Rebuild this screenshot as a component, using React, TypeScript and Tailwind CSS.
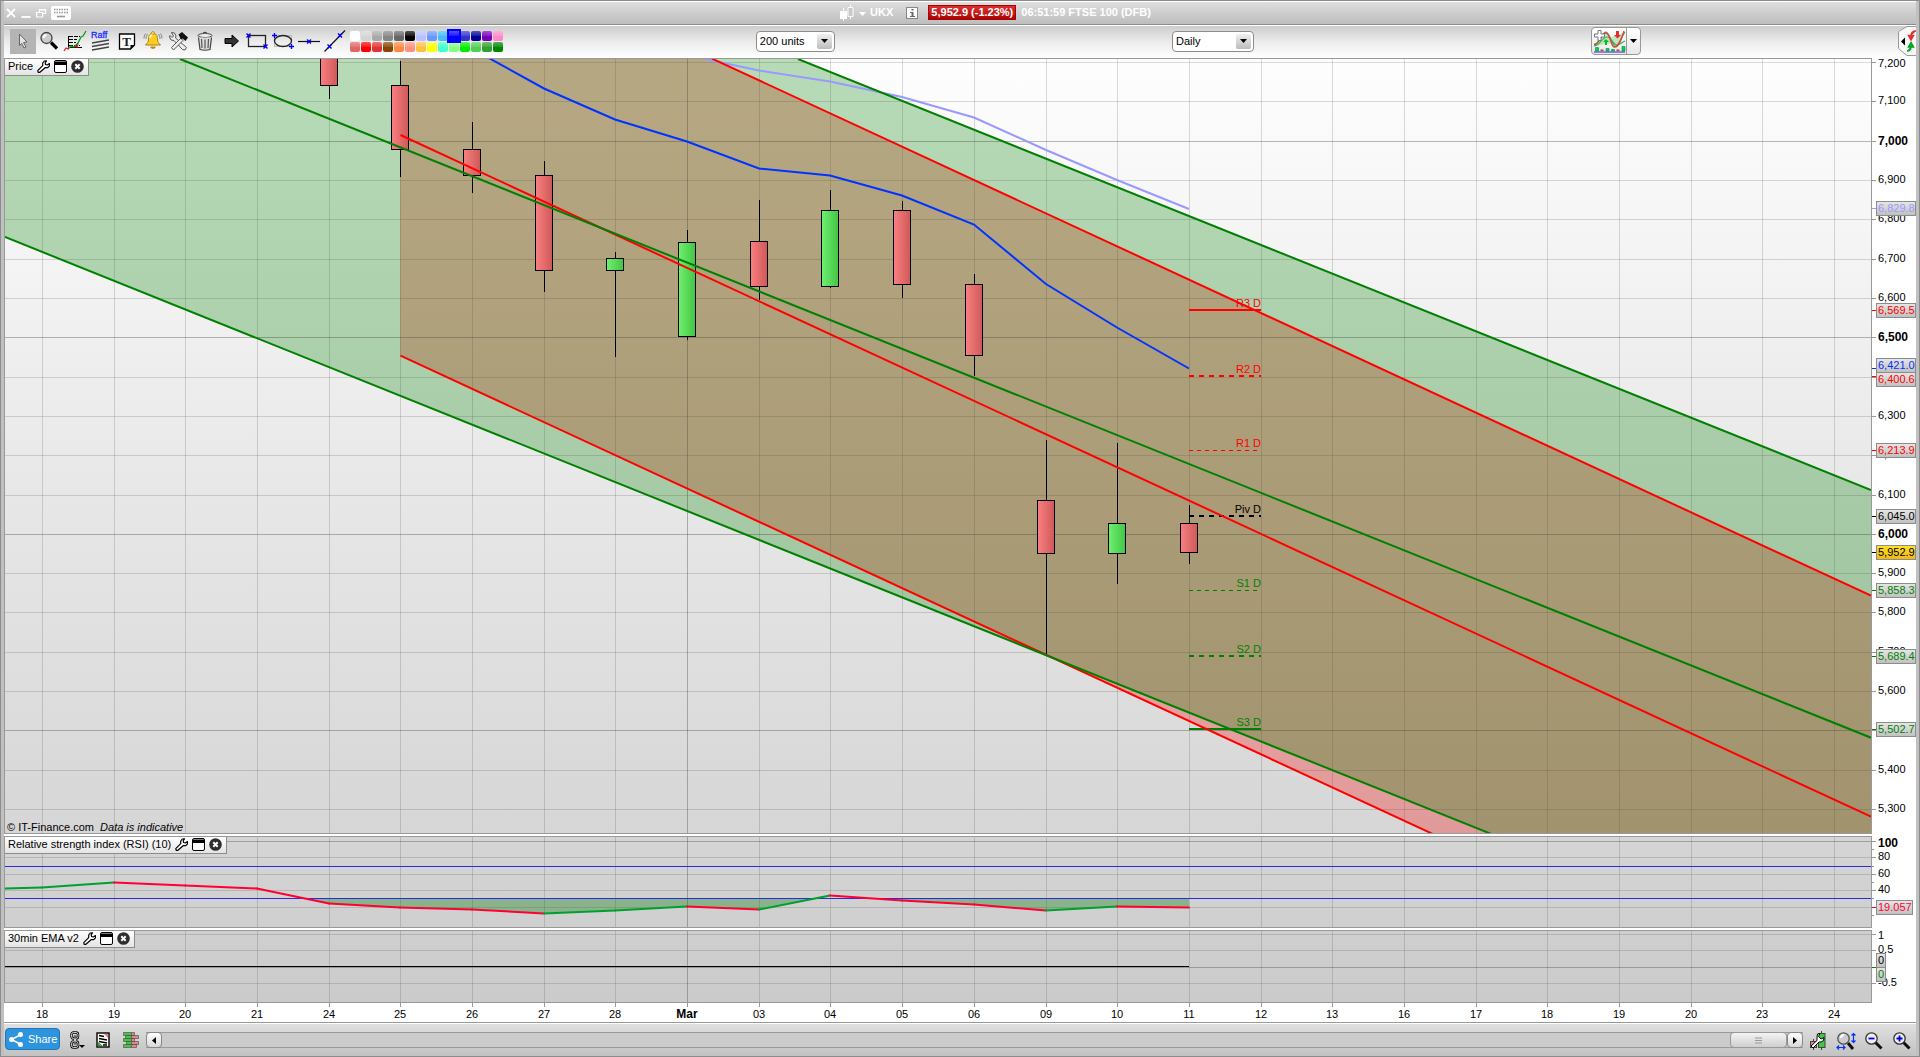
import type { ReactNode } from "react";

const DAYS: [string, number][] = [
  ["18", 42], ["19", 114], ["20", 185], ["21", 257], ["24", 329], ["25", 400], ["26", 472],
  ["27", 544], ["28", 615], ["Mar", 687], ["03", 759], ["04", 830], ["05", 902], ["06", 974],
  ["09", 1046], ["10", 1117], ["11", 1189], ["12", 1261], ["13", 1332], ["16", 1404],
  ["17", 1476], ["18", 1547], ["19", 1619], ["20", 1691], ["23", 1762], ["24", 1834],
];

const LEVELS: [number, number][] = [
  [7200, 62], [7100, 101], [7000, 141], [6900, 180], [6800, 219], [6700, 259], [6600, 298],
  [6500, 337], [6400, 377], [6300, 416], [6200, 455], [6100, 495], [6000, 534], [5900, 573],
  [5800, 612], [5700, 652], [5600, 691], [5500, 730], [5400, 770], [5300, 809],
];
const percentX = (x: number) => `${((x - 5) / 1866) * 100}%`;

// center, high, open/close top, open/close bottom, low, rising
const CANDLES: [number, number, number, number, number, boolean][] = [
  [329, 40, 40, 85, 99, false],
  [400, 61, 85, 149, 177, false],
  [472, 122, 149, 175, 193, false],
  [544, 161, 175, 270, 292, false],
  [615, 252, 258, 270, 357, true],
  [687, 230, 242, 336, 340, true],
  [759, 200, 241, 286, 300, false],
  [830, 190, 210, 286, 288, true],
  [902, 201, 210, 284, 298, false],
  [974, 274, 284, 355, 376, false],
  [1046, 440, 500, 553, 655, false],
  [1117, 443, 523, 553, 584, true],
  [1189, 505, 523, 552, 564, false],
];

const PIVOTS = [
  { name: "R3 D", y: 310, text: 307, color: "#ff0000", width: 2, dash: undefined },
  { name: "R2 D", y: 376, text: 373, color: "#ff0000", width: 2, dash: "5 5" },
  { name: "R1 D", y: 450.5, text: 447, color: "#ff0000", width: 1, dash: "4 4" },
  { name: "Piv D", y: 516, text: 513, color: "#000000", width: 2, dash: "5 5" },
  { name: "S1 D", y: 590.5, text: 587, color: "#008000", width: 1, dash: "4 4" },
  { name: "S2 D", y: 656, text: 653, color: "#008000", width: 2, dash: "5 5" },
  { name: "S3 D", y: 729, text: 726, color: "#008000", width: 2, dash: undefined },
];

const TAGS: { text: string; top: number; tick: number; color: string; gold?: boolean }[] = [
  { text: "6,829.8", top: 201, tick: 208, color: "#9999ff" },
  { text: "6,569.5", top: 303, tick: 310, color: "#ff0000" },
  { text: "6,400.6", top: 372, tick: 376, color: "#ff0000" },
  { text: "6,421.0", top: 358, tick: 368, color: "#0033ff" },
  { text: "6,213.9", top: 443, tick: 450, color: "#ff0000" },
  { text: "6,045.0", top: 509, tick: 516, color: "#000000" },
  { text: "5,952.9", top: 545, tick: 552, color: "#000000", gold: true },
  { text: "5,858.3", top: 583, tick: 590, color: "#008000" },
  { text: "5,689.4", top: 649, tick: 656, color: "#008000" },
  { text: "5,502.7", top: 722, tick: 729, color: "#008000" },
];

const RSI: [number, number][] = [
  [5, 888], [42, 887], [114, 882], [185, 885], [257, 888], [329, 903], [400, 907], [472, 909],
  [544, 913], [615, 910], [687, 906], [759, 909], [830, 895], [902, 900], [974, 904],
  [1046, 910], [1117, 906], [1189, 907],
];

const PALETTE = [
  ["#ffffff", "#d4d4d4", "#a8a8a8", "#858585", "#666666", "#000000", "#b8c0ff", "#6699ff", "#44bbff", "#0000ff", "#3333cc", "#000099", "#7700bb", "#ff88cc"],
  ["#dd6666", "#ff0000", "#e03333", "#884400", "#ff8844", "#ff9080", "#ffc040", "#ffff00", "#44ffcc", "#80ff80", "#00ee00", "#50d050", "#30a030", "#008800"],
];

const gridStroke = (major: boolean) => (major ? "rgba(70,70,60,0.38)" : "rgba(70,70,60,0.2)");

function DayGrid({ top, bottom }: { top: number; bottom: number }) {
  return (
    <g shapeRendering="crispEdges">
      {DAYS.map(([day, x]) => (
        <line key={x} x1={x + 0.5} x2={x + 0.5} y1={top} y2={bottom} stroke={gridStroke(day === "Mar")} />
      ))}
    </g>
  );
}

function RowGrid({ rows, major = [] }: { rows: number[]; major?: number[] }) {
  return (
    <g shapeRendering="crispEdges">
      {rows.map((y) => (
        <line key={y} x1="5" x2="1871" y1={y + 0.5} y2={y + 0.5} stroke={gridStroke(major.includes(y))} />
      ))}
    </g>
  );
}

function Wrench() {
  return (
    <svg className="h-[13px] w-[13px]" viewBox="0 0 13 13" fill="#fff" stroke="#000" strokeWidth="1.2" strokeLinejoin="round">
      <path d="M9.5.8 8.2 2.6l.3 1.9 1.8.4L12.4 3.600l.1 2.300-1.700 1.700-2.700.1-5.200 4.600H1.200L.8 10.600l4.900-5V3L7.300 1z" />
    </svg>
  );
}

function PanelTag({ title }: { title: string }) {
  return (
    <div className="absolute top-0 left-0 flex h-[17px] items-center gap-1 border-r border-b border-[#8c8c8c] bg-linear-to-b from-white to-[#e4e4e4] pr-1 pb-0.5 pl-[3px] text-[11px] leading-[14px] whitespace-nowrap">
      <span>{title}</span>
      <button type="button" aria-label={`${title} settings`}><Wrench /></button>
      <button type="button" aria-label={`Maximize ${title}`}>
        <svg className="h-[13px] w-[13px]" viewBox="0 0 13 13">
          <rect x=".5" y=".5" width="12" height="12" rx="1.500" fill="#fff" stroke="#000" />
          <path d="M1 1.500h11V5H1z" />
        </svg>
      </button>
      <button type="button" aria-label={`Close ${title}`}>
        <svg className="h-[13px] w-[13px]" viewBox="0 0 13 13">
          <circle cx="6.500" cy="6.500" r="6.300" fill="#2e2e2e" />
          <path d="m4.300 4.300 4.400 4.400m0-4.400L4.300 8.700" stroke="#fff" strokeWidth="2" />
        </svg>
      </button>
    </div>
  );
}

function PriceChart() {
  return (
    <>
      <svg className="block h-full w-full" role="img" aria-label="FTSE 100 daily price chart">
        <svg width="100%" height="100%" viewBox="5 59 1866 774" preserveAspectRatio="none">
          <defs>
            <linearGradient id="falling"><stop offset="0" stopColor="#f88080" /><stop offset="1" stopColor="#cf5858" /></linearGradient>
            <linearGradient id="rising"><stop offset="0" stopColor="#70f070" /><stop offset="1" stopColor="#44c444" /></linearGradient>
          </defs>
          <path d="M400-86 1871 595.700V1038L400 355.700z" fill="#ff0000" fillOpacity=".28" />
          <path d="M5-260 1871 490V987L5 237z" fill="#008000" fillOpacity=".28" />
          <DayGrid top={59} bottom={833} />
          <RowGrid rows={LEVELS.map(([, y]) => y)} major={[141, 337, 534, 730]} />
          {CANDLES.map(([x, high, top, bottom, low, up]) => (
            <g key={x} stroke="#000">
              <path d={`M${x + 0.5} ${high}V${low}`} />
              <rect x={x - 8.5} y={top + 0.5} width="17" height={bottom - top} fill={up ? "url(#rising)" : "url(#falling)"} />
            </g>
          ))}
          <path d="M705 59 759 70.500 830 81.500 902 97 974 117.500 1046 150 1117 180 1189 209" fill="none" stroke="#9999ff" strokeWidth="2" />
          <path d="M487 57 544 88.500 615 119.500 687 141.500 759 168.500 830 175.500 902 195.500 974 224.500 1046 284 1117 327.500 1189 368.500" fill="none" stroke="#0033ff" strokeWidth="2" />
          {PIVOTS.map((p) => (
            <line key={p.name} x1="1189" x2="1261" y1={p.y} y2={p.y} stroke={p.color} strokeWidth={p.width} strokeDasharray={p.dash} />
          ))}
          <g fill="none" stroke="#ff0000" strokeWidth="2">
            <path d="M712 58.600 1871 595.700" />
            <path d="M400.500 135 1871 816.700" />
            <path d="M400.500 355.700 1871 1037" />
          </g>
          <g fill="none" stroke="#008000" strokeWidth="2">
            <path d="M798 59 1871 490" />
            <path d="M180 59 1871 737.700" />
            <path d="M5 237 1871 986.500" />
          </g>
        </svg>
        {PIVOTS.map((p) => (
          <text key={p.name} x={percentX(1261)} y={p.text - 59} textAnchor="end" fontSize="11" fill={p.color}>{p.name}</text>
        ))}
      </svg>
      <PanelTag title="Price" />
      <p className="absolute bottom-0 left-0.5 text-[11px] leading-[11px]">
        © IT-Finance.com&nbsp; <i>Data is indicative</i>
      </p>
    </>
  );
}

function Tag({ x = 1876, width = 39, top, tick, text, color, gold }: { x?: number; width?: number; top: number; tick: number; text: string; color: string; gold?: boolean }) {
  return (
    <g>
      <path d={`M1872 ${tick + 0.5}h4`} stroke={color} />
      <rect x={x + 0.5} y={top + 0.5} width={width} height="14" fill={gold ? "url(#gold)" : "url(#silver)"} stroke="#8c8c8c" />
      <text x={x + 2} y={top + 11} fill={color}>{text}</text>
    </g>
  );
}

function PriceAxis() {
  return (
    <svg className="block h-[776px] w-11" viewBox="1872 58 44 776" fontSize="11">
      <defs>
        <linearGradient id="silver" x2="0" y2="1"><stop offset="0" stopColor="#e6e6e6" /><stop offset="1" stopColor="#c0c0c0" /></linearGradient>
        <linearGradient id="gold" x2="0" y2="1"><stop offset="0" stopColor="#ffe428" /><stop offset="1" stopColor="#f0b414" /></linearGradient>
      </defs>
      {LEVELS.map(([p, y]) => {
        const bold = p % 500 === 0;
        return (
          <g key={p}>
            <path d={`M1872 ${y + 0.5}h4`} stroke="#999" />
            <text x="1878" y={p === 7200 ? y + 5 : bold ? y + 4 : y + 3} fontSize={bold ? 12 : 11} fontWeight={bold ? 700 : 400}>
              {p.toLocaleString("en-US")}
            </text>
          </g>
        );
      })}
      {TAGS.map((t) => <Tag key={t.text} {...t} />)}
    </svg>
  );
}

function RsiChart() {
  return (
    <>
      <svg className="block h-full w-full" viewBox="5 837 1866 90" preserveAspectRatio="none" role="img" aria-label="Relative strength index">
        <DayGrid top={837} bottom={927} />
        <RowGrid rows={[841, 857, 874, 890, 907]} major={[841]} />
        <path d="M305 898.500 329 903.500 400 907.500 472 909.500 544 913.500 615 910.500 687 906.500 759 909.500 815 898.500z M878 898.500 902 900.500 974 904.500 1046 910.500 1117 906.500 1189 907.500V898.500z" fill="#108010" fillOpacity=".36" />
        <path d="M5 866.500H1871M5 898.500H1871" stroke="#2a2ae0" shapeRendering="crispEdges" />
        {RSI.slice(1).map(([x, y], i) => (
          <path key={x} d={`M${RSI[i][0]} ${RSI[i][1] + 0.5}L${x} ${y + 0.5}`} stroke={y > RSI[i][1] ? "#ff0033" : "#00a030"} strokeWidth="2" strokeLinecap="round" />
        ))}
      </svg>
      <PanelTag title="Relative strength index (RSI) (10)" />
    </>
  );
}

function RsiAxis() {
  return (
    <svg className="block h-[92px] w-11" viewBox="1872 836 44 92" fontSize="11">
      <path d="M1872 841.500h4m-4 16h4m-4 17h4m-4 16h4m-4-41h2m-2 17h2m-2 16h2m-2 16h2m-2 17h2" stroke="#999" />
      <text x="1878" y="847" fontSize="12" fontWeight="700">100</text>
      <text x="1878" y="860">80</text>
      <text x="1878" y="877">60</text>
      <text x="1878" y="893">40</text>
      <Tag top={900} tick={907} width={36} text="19.057" color="#ff0033" />
    </svg>
  );
}

function EmaChart() {
  return (
    <>
      <svg className="block h-full w-full" viewBox="5 931 1866 71" preserveAspectRatio="none" role="img" aria-label="30min EMA v2">
        <DayGrid top={931} bottom={1002} />
        <RowGrid rows={[934, 950, 967, 983]} major={[967]} />
        <path d="M5 966.500H1189" stroke="#000" shapeRendering="crispEdges" />
      </svg>
      <PanelTag title="30min EMA v2" />
    </>
  );
}

function EmaAxis() {
  return (
    <svg className="block h-[73px] w-11" viewBox="1872 930 44 73" fontSize="11">
      <path d="M1872 934.500h4m-4 16h4m-4 33h4" stroke="#999" />
      <text x="1878" y="939">1</text>
      <text x="1878" y="953">0.5</text>
      <text x="1878" y="986">-0.5</text>
      <Tag top={967} tick={967} width={9} text="0" color="#008000" />
      <Tag top={953} tick={967} width={9} text="0" color="#000000" />
      <path d="M1872 967.500h4" stroke="#008000" />
    </svg>
  );
}

function Tool({ label, children, active }: { label: string; children: ReactNode; active?: boolean }) {
  return (
    <button type="button" aria-label={label} className={active ? "flex h-[25px] w-[26px] items-center justify-center bg-[#b4b4b4]" : "flex h-[25px] w-[26px] items-center justify-center"}>
      <svg className="h-6 w-6" viewBox="0 0 24 24" fill="none">{children}</svg>
    </button>
  );
}

const Cross = ({ x, y }: { x: number; y: number }) => (
  <path d={`M${x - 2} ${y - 2}l4 4m0-4l-4 4`} stroke="#0000ff" strokeWidth="1.4" />
);

function Tools() {
  return (
    <div className="flex">
      <Tool label="Select" active>
        <path d="m8.500 5 7.500 8-3.500.5 2.500 4.500-2 1-2.300-4.600-2.200 2.100z" fill="#e4e4e4" stroke="#666" />
      </Tool>
      <Tool label="Zoom">
        <circle cx="9.500" cy="9" r="5.500" fill="#ccc" stroke="#444" strokeWidth="1.300" />
        <path d="M6.500 9a3 3 0 0 1 3-3" stroke="#fff" strokeWidth="2" />
        <path d="m14 13.500 6 6" stroke="#000" strokeWidth="3.200" />
      </Tool>
      <Tool label="Indicator list">
        <path d="M6 7.500h11M6 10.500h8M6 13.500h7M6 16.500h11" stroke="#000" strokeWidth="1.200" strokeDasharray="4 1" />
        <path d="M5.500 7v11.500H19" stroke="#000" />
        <path d="m5 20 3-3 3 1 4-4 3-6 2-1 3-5" stroke="#00a020" strokeWidth="1.300" />
        <path d="m1 22 2-3 2 1 1-2m6-1 2 1 1-3" stroke="#e02020" strokeWidth="1.300" />
      </Tool>
      <Tool label="Raff channel">
        <text x="2" y="9" fontSize="9" fill="#1830ff" stroke="#1830ff" strokeWidth=".3">Raff</text>
        <path d="m3 14 17-3M3 17.500l17-3M3 21l17-3" stroke="#444" strokeWidth="1.400" />
      </Tool>
      <Tool label="Text">
        <path d="M4.500 5h15v11l-4 4h-11z" fill="#fff" stroke="#000" strokeWidth="1.300" />
        <path d="M15.500 20v-4h4z" fill="#000" />
        <text x="11.500" y="16.500" fontSize="13" fontWeight="700" textAnchor="middle" fill="#222" fontFamily="Liberation Serif, serif">T</text>
      </Tool>
      <Tool label="Alert">
        <path d="M12 4.500c4 0 4.500 3 4.500 6.500 0 2 1.500 3 3 5h-15c1.500-2 3-3 3-5 0-3.500.5-6.500 4.500-6.500z" fill="#ffcc20" stroke="#a88010" />
        <circle cx="12" cy="4" r="1.500" fill="#ffe060" stroke="#a88010" strokeWidth=".7" />
        <path d="M9 9c0-2 1-3 2.500-3" stroke="#fff6b0" strokeWidth="1.600" />
        <path d="M9.500 17.500h5v1.500l-2.500 1-2.500-1z" fill="#c08a10" />
        <path d="M5 10c0-2 .5-3.500 1.500-5M3 9.500C3 7.500 3.500 6 4.500 4.500M19 10c0-2-.5-3.500-1.500-5m3.500 4.500c0-2-.5-3.500-1.500-5" stroke="#777" strokeWidth=".9" />
      </Tool>
      <Tool label="Tools">
        <path d="M4.500 3.500 7.500 4l1.500 3-.5 2L19.500 18.500l-1.500 2.500-2.500-.5L7 11.500l-3-.5-1.500-3 .5-1.500L5 8.500 6.500 7z" fill="#eee" stroke="#555" />
        <path d="m14 9-9.500 9.500 2 2.500 9.500-9.500z" fill="#eee" stroke="#555" />
        <path d="m11.500 5.500 3.500-2.500 6 5.500-2.500 3.500-3-2.500-1.500 1z" fill="#111" />
      </Tool>
      <Tool label="Delete">
        <ellipse cx="12" cy="6.500" rx="7" ry="2" fill="#eee" stroke="#444" />
        <path d="M10 4.500q2-2 4 0M5.500 8.500 7 20.500q5 1.500 10 0l1.500-12" fill="#ddd" stroke="#444" strokeWidth="1.200" />
        <path d="m8.500 10 .5 9m3-8.500v9m3.500-9.500-.5 9" stroke="#555" strokeWidth="1.200" />
      </Tool>
      <Tool label="Arrow"><path d="M6 9.500h7V6l6.500 6-6.500 6v-3.500H6z" fill="#333" stroke="#000" /></Tool>
      <Tool label="Rectangle">
        <rect x="3.500" y="6.500" width="17" height="11" stroke="#222" strokeWidth="1.300" />
        <Cross x={3.500} y={6.500} /><Cross x={20.500} y={17.500} />
      </Tool>
      <Tool label="Ellipse">
        <rect x="3.500" y="6.500" width="17" height="11" stroke="#bbb" />
        <ellipse cx="12" cy="12" rx="8.500" ry="5.500" stroke="#222" strokeWidth="1.300" />
        <path d="M3.500 4v5M1 6.500h5m14.500 8.500v5M18 17.500h5" stroke="#0000ff" strokeWidth="1.300" />
      </Tool>
      <Tool label="Horizontal line"><path d="M1 12.500h22" stroke="#111" strokeWidth="1.200" /><Cross x={12} y={12.500} /></Tool>
      <Tool label="Line"><path d="M1.500 22.500 22 1.500" stroke="#111" strokeWidth="1.200" /><Cross x={6.500} y={17.500} /><Cross x={17} y={6.500} /></Tool>
    </div>
  );
}

function Palette() {
  return (
    <div className="ml-0.5 flex flex-col gap-px">
      {PALETTE.map((row, r) => (
        <div key={r} className="flex gap-px">
          {row.map((color) => (
            <button
              type="button"
              key={color}
              aria-label={`Colour ${color}`}
              className={color === "#0000ff" ? "relative h-2.5 w-2.5 rounded-none ring-2 ring-[#0000ff]" : "h-2.5 w-2.5 rounded-xs"}
              style={{ backgroundImage: "linear-gradient(rgba(255,255,255,.32), rgba(255,255,255,.12) 45%, transparent 50%)", backgroundColor: color }}
            />
          ))}
        </div>
      ))}
    </div>
  );
}

function Dropdown({ label, value, options, className }: { label: string; value: string; options: string[]; className: string }) {
  return (
    <div className={`relative ${className}`}>
      <select aria-label={label} defaultValue={value} className="block h-[21px] w-full appearance-none rounded-sm border border-[#8c8c8c] bg-white pl-[3px] text-[11px] leading-4">
        {options.map((o) => <option key={o}>{o}</option>)}
      </select>
      <span className="pointer-events-none absolute top-[3px] right-[3px] flex h-[15px] w-[15px] items-center justify-center rounded-xs bg-linear-to-b from-[#f0f0f0] to-[#bdbdbd]">
        <svg className="h-1 w-[7px]" viewBox="0 0 7 4"><path d="M0 0h7L3.500 4z" /></svg>
      </span>
    </div>
  );
}

function TitleBar() {
  return (
    <header className="flex h-6 items-center border-t border-b border-t-white border-b-[#8c8c8c] bg-linear-to-b from-[#dedede] to-[#bdbdbd] pb-px pl-0.5 text-[11px] font-bold text-white">
      <div className="flex w-[68px] items-center gap-1">
        <button type="button" aria-label="Close window"><svg className="h-2.5 w-2.5" viewBox="0 0 10 10"><path d="m1 1 8 8m0-8L1 9" stroke="#fff" strokeWidth="1.800" /></svg></button>
        <button type="button" aria-label="Minimize window" className="ml-px"><svg className="h-2.5 w-2.5" viewBox="0 0 10 10"><path d="M.5 9h9" stroke="#fff" strokeWidth="1.800" /></svg></button>
        <button type="button" aria-label="Restore window" className="ml-px"><svg className="h-2.5 w-2.5" viewBox="0 0 10 10" fill="none" stroke="#fff" strokeWidth="1.200"><path d="M3.500 4V1.500h6v4H7M.6 4.500h6v4.500h-6zM3.500 2h6" /></svg></button>
        <button type="button" aria-label="Keyboard" className="ml-px shrink-0">
          <svg className="h-3.5 w-5" viewBox="0 0 20 14"><rect width="20" height="14" rx="2" fill="#fff" /><path d="M3 3.500h14M3 6.500h14" stroke="#999" strokeWidth="1.600" strokeDasharray="1.500 1" /><path d="M6 10.500h8" stroke="#999" strokeWidth="1.600" /></svg>
        </button>
      </div>
      <div className="flex flex-1 items-center justify-center whitespace-nowrap">
        <svg className="h-4 w-[15px]" viewBox="0 0 15 16"><path d="M4.500 3v13M11.500 0v14" stroke="#fff" /><path d="M1 6h7v8H1z" fill="#fff" /><path d="M9 2.500h5v9H9z" fill="#c8c8c8" stroke="#fff" /></svg>
        <svg className="mt-0.5 ml-[5px] h-1 w-[7px]" viewBox="0 0 7 4"><path d="M0 0h7L3.500 4z" fill="#fff" /></svg>
        <span className="ml-1">UKX</span>
        <button type="button" aria-label="Instrument information" className="ml-[13px] flex h-3 w-3 items-center justify-center border border-[#888] bg-white">
          <svg className="h-2 w-[5px]" viewBox="0 0 5 8"><path d="M1.500 0h2v1.500h-2zM0 3h3.500v4H5v1H0V7h1.500V4H0z" fill="#667" /></svg>
        </button>
        <span className="ml-2.5 border border-[#a00] bg-linear-to-b from-[#dd3030] to-[#aa0000] px-0.5 leading-[13px]">5,952.9 (-1.23%)</span>
        <span className="ml-[5px]">06:51:59 FTSE 100 (DFB)</span>
      </div>
    </header>
  );
}

function Toolbar() {
  return (
    <div className="flex h-[33px] items-center border-t border-white bg-linear-to-b from-[#cdcdcd] via-[#ececec] to-white pb-0.5 pl-1.5">
      <Tools />
      <Palette />
      <div className="grow-[3]" />
      <Dropdown label="Units shown" value="200 units" options={["100 units", "200 units", "500 units"]} className="w-[79px]" />
      <div className="grow-[4]" />
      <Dropdown label="Timeframe" value="Daily" options={["Hourly", "Daily", "Weekly"]} className="w-[82px]" />
      <div className="grow-[4]" />
      <div className="mr-1 flex h-7 rounded-sm border border-[#999] bg-linear-to-b from-white to-[#e8e8e8]">
        <button type="button" aria-label="Add indicator" className="w-[35px] border-r border-[#999] pl-0.5">
          <svg className="h-6 w-8" viewBox="0 0 32 24" fill="none">
            <path d="M0 15c6 1 6-11 12-12 4 0 6 15 10 15 3 0 6-12 9-15M0 17C6 17 8 8 13 8c5 0 6 8 10 8 3 0 5-3 8-4" stroke="#40b050" strokeWidth="1.200" fill="#70d07066" />
            <path d="M0 16C6 15 7 4 12 4c4 0 5 14 8 14 4 0 8-9 10-16" stroke="#e04040" strokeWidth="1.300" />
            <path d="M4 1.500h3V5h3.500v3H7v3.500H4V8H.5V5H4z" fill="#fff" stroke="#778" />
            <path d="m12 10 3 3h-2v3h-2v-3H9z" fill="#00c020" />
            <path d="M22 2h3v4h2l-3.500 3.500L20 6h2z" fill="#e03030" />
            <path d="M1.500 18.500h3V22h-3zM12 19.500h3V22h-3zM17.500 20.500h3V22h-3zM28 17.500h3V22h-3z" fill="#00dd20" stroke="#086" strokeWidth=".6" />
            <path d="M6.500 20.500h3V22h-3zM22.500 20.500h3V22h-3z" fill="#e03030" />
            <path d="M0 23h31" stroke="#2020cc" />
          </svg>
        </button>
        <button type="button" aria-label="Indicator menu" className="flex w-[13px] items-center justify-center">
          <svg className="h-1 w-[7px]" viewBox="0 0 7 4"><path d="M0 0h7L3.500 4z" /></svg>
        </button>
      </div>
      <div className="grow-[3]" />
      <button type="button" aria-label="Open trading panel" className="h-[30px] w-[18px]">
        <svg className="h-[30px] w-[18px]" viewBox="0 0 18 30" fill="none">
          <path d="M18 .5H9L1.500 5Q.5 5.500.5 7v14q0 1.500 1 2.500L9 29.500h9" fill="#f8f8f8" stroke="#999" />
          <path d="M7 11.500v8L3 15.500z" fill="#000" />
          <path d="M18 5q-5 0-5 5M10.500 9.500h5L13 14z" stroke="#e03030" strokeWidth="1.500" fill="#e03030" />
          <path d="M9 25q4 0 4-5M10.500 21h5L13 16.500z" stroke="#00a020" strokeWidth="1.500" fill="#00c030" />
        </svg>
      </button>
    </div>
  );
}

function Magnifier({ children }: { children?: ReactNode }) {
  return (
    <svg className="h-[18px] w-[18px]" viewBox="0 0 18 18" fill="none">
      <path d="m10.500 10.500 6 6" stroke="#111" strokeWidth="3" />
      <circle cx="6.500" cy="6.500" r="5.700" fill="#eee" stroke="#333" strokeWidth="1.300" />
      {children}
    </svg>
  );
}

const LINKS = "M4 7.500H3.500a2 2 0 0 1-2-2v-2a2 2 0 0 1 2-2H6a2 2 0 0 1 2 2v2a2 2 0 0 1-2 2M4 10.500H3.500a2 2 0 0 0-2 2v2a2 2 0 0 0 2 2H6a2 2 0 0 0 2-2v-2a2 2 0 0 0-2-2M5 4.500v3M5 10.500v3";

function BottomBar() {
  return (
    <footer className="flex h-8 items-start bg-linear-to-b from-[#e0e0e0] to-[#c2c2c2] pt-1 pl-px">
      <button type="button" className="flex h-[22px] w-[55px] items-center gap-[5px] rounded-sm border border-[#1c78b8] bg-[#2d94dd] pl-[3px] text-[11px] text-white">
        <svg className="h-[15px] w-3.5" viewBox="0 0 14 15"><path d="M12 2.500 2.500 7.500 12 12.500" fill="none" stroke="#fff" strokeWidth="1.500" /><g fill="#fff"><circle cx="11.500" cy="2.500" r="2.500" /><circle cx="2.500" cy="7.500" r="2.500" /><circle cx="11.500" cy="12.500" r="2.500" /></g></svg>
        Share
      </button>
      <div className="mt-[3px] ml-2.5 flex items-center">
        <button type="button" aria-label="Link charts">
          <svg className="h-[18px] w-4" viewBox="0 0 16 18" fill="none">
            <path d={LINKS} stroke="#000" strokeWidth="2.400" />
            <path d={LINKS} stroke="#fff" strokeWidth=".8" />
            <path d="M9 14h6l-3 3z" fill="#000" />
          </svg>
        </button>
        <button type="button" aria-label="News" className="ml-2.5">
          <svg className="h-4 w-[14px]" viewBox="0 0 14 16"><rect x="1" y="1" width="12" height="14" fill="#fff" stroke="#000" strokeWidth="1.400" /><path d="M8 2h4v4z" fill="#f08080" /><path d="M2 10v4h5z" fill="#30a830" /><path d="m3 3.500 5 1m-5 2 8 1.500M3 9.500l8 1.500M7 13h4" stroke="#000" strokeWidth="1.300" /></svg>
        </button>
        <button type="button" aria-label="Order book" className="ml-[13px]">
          <svg className="h-4 w-[17px]" viewBox="0 0 17 16" stroke="#555" strokeWidth=".7"><g fill="#40c840"><path d="M.5.5h8v3h-8zM2.500 3.500h6v3h-6zM.5 6.500h8v3h-8zM3.500 9.500h5v3h-5zM.5 12.500h8v3h-8z" /></g><g fill="#e08888"><path d="M8.500.5h3v3h-3zM8.500 3.500h7v3h-7zM8.500 6.500h3v3h-3zM8.500 9.500h7v3h-7zM8.500 12.500h5v3h-5z" /></g></svg>
        </button>
      </div>
      <div className="mt-1 ml-[6px] flex h-4 flex-1 items-center border-y border-[#999] bg-[#cbcbcb]">
        <button type="button" aria-label="Scroll left" className="flex h-4 w-4 items-center justify-center rounded-sm border border-[#888] bg-linear-to-b from-white to-[#d8d8d8]">
          <svg className="h-[7px] w-1" viewBox="0 0 4 7"><path d="M4 0v7L0 3.500z" /></svg>
        </button>
        <div className="flex-1" />
        <button type="button" aria-label="Scroll position" className="flex h-4 w-[57px] items-center justify-center rounded-sm border border-[#999] bg-linear-to-b from-[#f4f4f4] to-[#cfcfcf]">
          <svg className="h-[7px] w-[7px]" viewBox="0 0 7 7"><path d="M0 1h7M0 3.500h7M0 6h7" stroke="#999" /></svg>
        </button>
        <button type="button" aria-label="Scroll right" className="flex h-4 w-4 items-center justify-center rounded-sm border border-[#888] bg-linear-to-b from-white to-[#d8d8d8]">
          <svg className="h-[7px] w-1" viewBox="0 0 4 7"><path d="M0 0v7l4-3.500z" /></svg>
        </button>
      </div>
      <div className="mt-[3px] flex items-center pr-[5px] pl-[7px]">
        <button type="button" aria-label="Chart settings">
          <svg className="h-[19px] w-4" viewBox="0 0 16 19"><path d="M11.500 0v19M3.500 8v11" stroke="#444" /><rect x="8.500" y="2.500" width="6.500" height="14" fill="#40c840" stroke="#444" /><rect x=".5" y="10.500" width="6" height="6" fill="#e08080" stroke="#444" /><path d="m7.500 3 2.500-.5-1.500 3L11 8l3-1.500-.5 3-2.500 1.500H9l-6 6L1 15l6-5.500V6z" fill="#fff" stroke="#000" /></svg>
        </button>
        <button type="button" aria-label="Fit zoom" className="ml-2.5">
          <svg className="h-[18px] w-5" viewBox="0 0 20 18" fill="none"><path d="m12 11 5 6" stroke="#111" strokeWidth="3" /><circle cx="7.500" cy="6.500" r="5.700" fill="#ccc" stroke="#555" strokeWidth="1.300" /><path d="M5 6a3 3 0 0 1 3-3" stroke="#fff" strokeWidth="2" /><path d="M17.500 1.500v9m-2-7 2-2 2 2m-4 5 2 2 2-2M1 15.500h8m-6-2-2 2 2 2m4-4 2 2-2 2" stroke="#0030ff" strokeWidth="1.200" /></svg>
        </button>
        <button type="button" aria-label="Zoom out" className="ml-[9px]"><Magnifier><path d="M3.500 6.500h6" stroke="#0000dd" strokeWidth="1.800" /></Magnifier></button>
        <button type="button" aria-label="Zoom in" className="ml-2.5"><Magnifier><path d="M3.500 6.500h6m-3-3v6" stroke="#0000dd" strokeWidth="1.800" /></Magnifier></button>
      </div>
    </footer>
  );
}

export default function App() {
  return (
    <div className="border border-[#8c8c8c] bg-[#c0c0c0] px-[3px] font-['Liberation_Sans',Arial,sans-serif] text-black">
      <TitleBar />
      <Toolbar />
      <main className="grid grid-cols-[1fr_44px] gap-y-0.5 bg-white">
        <section className="relative h-[776px] border border-[#999] bg-linear-to-b from-[#fefefe] to-[#d6d6d6]"><PriceChart /></section>
        <PriceAxis />
        <section className="relative h-[92px] border border-[#999] bg-linear-to-b from-[#d5d5d5] to-[#cfcfcf]"><RsiChart /></section>
        <RsiAxis />
        <section className="relative h-[73px] border border-[#999] bg-linear-to-b from-[#cfcfcf] to-[#cbcbcb]"><EmaChart /></section>
        <EmaAxis />
      </main>
      <div className="border-b border-[#999] bg-white pr-[45px] pl-px">
        <svg className="block h-[19px] w-full overflow-visible" fontSize="11" textAnchor="middle" role="img" aria-label="Dates">
          {DAYS.map(([day, x]) => (
            <g key={x}>
              <line x1={percentX(x + 0.5)} x2={percentX(x + 0.5)} y1="0" y2="4" stroke="#999" />
              <text x={percentX(x)} y="15" fontWeight={day === "Mar" ? 700 : 400} fontSize={day === "Mar" ? 12 : 11}>{day}</text>
            </g>
          ))}
        </svg>
      </div>
      <div className="h-px bg-white" />
      <BottomBar />
    </div>
  );
}
